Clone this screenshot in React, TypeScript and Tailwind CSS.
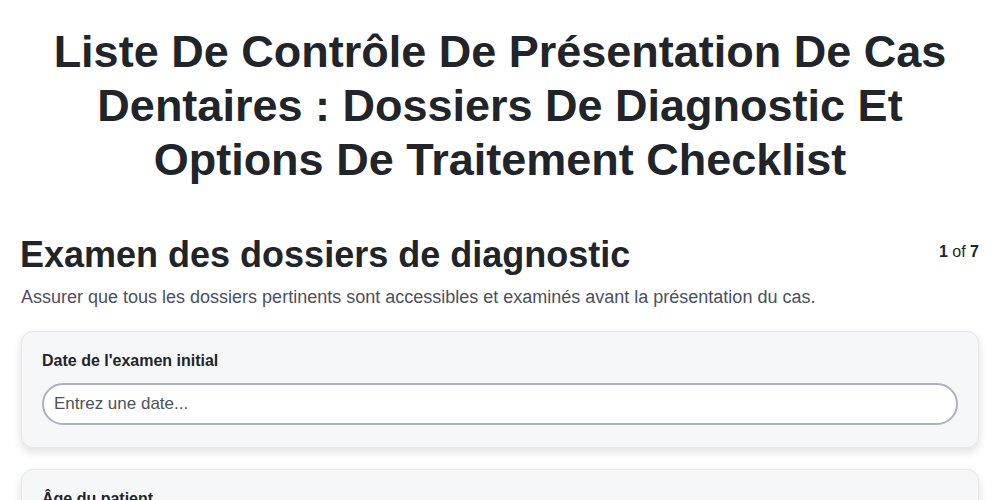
export default function App() {
  return (
    <div className="min-h-screen bg-white px-[21px] font-['Liberation_Sans',Arial,sans-serif] text-[#212529]">
      <h1 className="mx-auto max-w-[900px] pt-[25px] text-center text-[45px] font-bold leading-[54px]">
        Liste De Contrôle De Présentation De Cas Dentaires : Dossiers De Diagnostic Et Options De Traitement Checklist
      </h1>

      <div className="mt-[46px] flex items-start justify-between">
        <h2 className="-ml-px text-[36px] font-bold leading-[43px]">Examen des dossiers de diagnostic</h2>
        <div className="pt-[7px] text-[16px]">
          <span className="font-bold">1</span> of <span className="font-bold">7</span>
        </div>
      </div>
      <p className="mt-[8px] text-[18px] leading-[27px] text-[#4b5060]">
        Assurer que tous les dossiers pertinents sont accessibles et examinés avant la présentation du cas.
      </p>

      <div className="mt-[20px] flex flex-col gap-[21px]">
        <div className="rounded-[12px] border border-[#e6e7eb] bg-[#f6f7f9] px-[20px] pb-[22px] pt-[20px] shadow-[0_4px_10px_rgba(0,0,0,0.12)]">
          <label className="block text-[16px] font-bold leading-[18px]">Date de l'examen initial</label>
          <input
            className="mt-[13px] h-[42px] w-full rounded-full border-2 border-[#aab2bb] bg-white px-[10px] text-[17px] text-[#212529] outline-none placeholder:text-[#4b5060]"
            placeholder="Entrez une date..."
          />
        </div>
        <div className="rounded-[12px] border border-[#e6e7eb] bg-[#f6f7f9] px-[20px] pb-[22px] pt-[20px] shadow-[0_4px_10px_rgba(0,0,0,0.12)]">
          <label className="block text-[16px] font-bold leading-[18px]">Âge du patient</label>
          <input
            className="mt-[13px] h-[42px] w-full rounded-full border-2 border-[#aab2bb] bg-white px-[10px] text-[17px] outline-none placeholder:text-[#4b5060]"
            placeholder="Entrez un nombre..."
          />
        </div>
      </div>
    </div>
  );
}
